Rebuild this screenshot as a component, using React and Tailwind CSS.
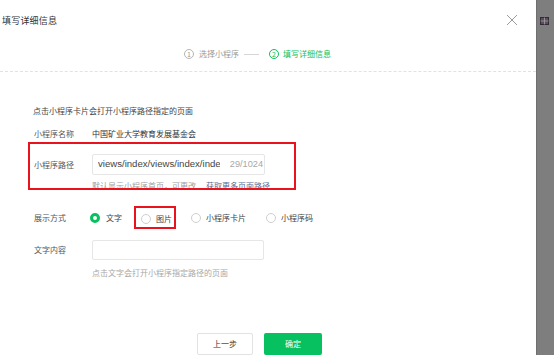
const font = { fontFamily: '"Noto Sans CJK SC", "Noto Sans", sans-serif' };
const latin = { fontFamily: '"Liberation Sans", Arial, sans-serif' };

function Radio({ checked }) {
  return checked ? (
    <span className="w-[10px] h-[10px] rounded-full border-[3px] border-[#07c160] bg-white shrink-0" />
  ) : (
    <span className="w-[10px] h-[10px] rounded-full border border-[#cfcfcf] bg-white shrink-0" />
  );
}

export default function App() {
  return (
    <div
      className="flex w-[554px] h-[355px] overflow-hidden bg-white text-[#353535]"
      style={font}
    >
      <div className="w-[536px] h-full bg-white flex flex-col">
        {/* header */}
        <div className="h-[44px] flex items-center justify-between pl-[2px] pr-[18px]">
          <span className="text-[9px] tracking-[0.2px] text-[#333]">填写详细信息</span>
          <svg width="12" height="12" viewBox="0 0 12 12" className="-mt-[2px]">
            <path d="M1 1 L11 11 M11 1 L1 11" stroke="#9a9a9a" strokeWidth="1" fill="none" />
          </svg>
        </div>

        {/* steps */}
        <div className="h-[32px] pb-[4px] border-b border-dashed border-[#e2e2e2] flex items-center pl-[184px]">
          <span className="w-[10px] h-[10px] rounded-full border border-[#b5b5b5] text-[7px] leading-[8px] text-center text-[#9a9a9a]">
            1
          </span>
          <span className="ml-[5px] text-[8px] text-[#9a9a9a]">选择小程序</span>
          <span className="ml-[5px] w-[15px] h-px bg-[#d6d6d6]" />
          <span className="ml-[10px] w-[10px] h-[10px] rounded-full border border-[#07c160] text-[7px] leading-[8px] text-center text-[#07c160]">
            2
          </span>
          <span className="ml-[4px] text-[8px] text-[#07c160]">填写详细信息</span>
        </div>

        {/* body */}
        <div className="flex flex-col">
          <div className="mt-[33px] pl-[33px] h-[12px] leading-[12px] text-[8px] text-[#444]">
            点击小程序卡片会打开小程序路径指定的页面
          </div>

          <div className="mt-[11px] pl-[34px] h-[12px] flex items-center text-[8px]">
            <span className="w-[58px] text-[#555]">小程序名称</span>
            <span className="text-[#333]">中国矿业大学教育发展基金会</span>
          </div>

          {/* path row (highlighted) */}
          <div className="mt-[2px] ml-[28px] w-[268px] h-[48px] border-2 border-[#e8131c] overflow-hidden">
            <div className="pt-[10px] pl-[4px] flex items-center">
              <span className="w-[58px] text-[8px] text-[#555]">小程序路径</span>
              <div className="w-[173px] h-[21px] border border-[#e6e6e6] rounded-[2px] flex items-center pl-[5px] pr-[1px]">
                <span
                  className="flex-1 overflow-hidden whitespace-nowrap text-[9.6px] text-[#444]"
                  style={latin}
                >
                  views/index/views/index/index
                </span>
                <span className="ml-[10px] shrink-0 text-[9.2px] text-[#a8a8a8]" style={latin}>
                  29/1024
                </span>
              </div>
            </div>
            <div className="mt-[5px] pl-[62px] h-[12px] leading-[12px] text-[8px] whitespace-nowrap">
              <span className="text-[#a0a0a0]">默认显示小程序首页，可更改</span>
              <span className="ml-[10px] text-[#576b95]">获取更多页面路径</span>
            </div>
          </div>

          {/* display mode */}
          <div className="mt-[16px] pl-[34px] h-[23px] flex items-center text-[8px]">
            <span className="w-[56px] text-[#555]">展示方式</span>
            <Radio checked />
            <span className="ml-[6px] text-[#444]">文字</span>
            <div className="ml-[12px] h-[23px] w-[42px] border-2 border-[#e8131c] flex items-center pl-[5px] pt-[2px]">
              <Radio />
              <span className="ml-[5px] text-[#444]">图片</span>
            </div>
            <span className="ml-[15px] flex items-center">
              <Radio />
              <span className="ml-[5px] text-[#444]">小程序卡片</span>
            </span>
            <span className="ml-[20px] flex items-center">
              <Radio />
              <span className="ml-[5px] text-[#444]">小程序码</span>
            </span>
          </div>

          {/* text content */}
          <div className="mt-[11px] pl-[34px] flex items-center text-[8px]">
            <span className="w-[58px] text-[#555]">文字内容</span>
            <div className="w-[172px] h-[20px] border border-[#e6e6e6] rounded-[2px]" />
          </div>
          <div className="mt-[7px] pl-[92px] h-[12px] leading-[12px] text-[8px] text-[#a8a8a8]">
            点击文字会打开小程序指定路径的页面
          </div>

          {/* buttons */}
          <div className="mt-[54px] pl-[197px] flex gap-[11px] text-[8px]">
            <button className="w-[56px] h-[22px] border border-[#e2e2e2] rounded-[2px] bg-white text-[#333]">
              上一步
            </button>
            <button className="w-[58px] h-[22px] rounded-[2px] bg-[#07c160] text-white">
              确定
            </button>
          </div>
        </div>
      </div>

      {/* right gray strip */}
      <div className="w-[18px] h-full bg-[#7e7e7e] border-l border-[#6f6f6f] pt-[17px] pl-[3px]">
        <svg width="9" height="8" viewBox="0 0 9 8">
          <rect x="0.5" y="0.5" width="8" height="7" fill="#5a4f5c" stroke="#2f2a33" />
          <path d="M0.5 4 H8.5 M4.5 0.5 V7.5" stroke="#a99aa8" strokeWidth="0.8" />
        </svg>
      </div>
    </div>
  );
}
